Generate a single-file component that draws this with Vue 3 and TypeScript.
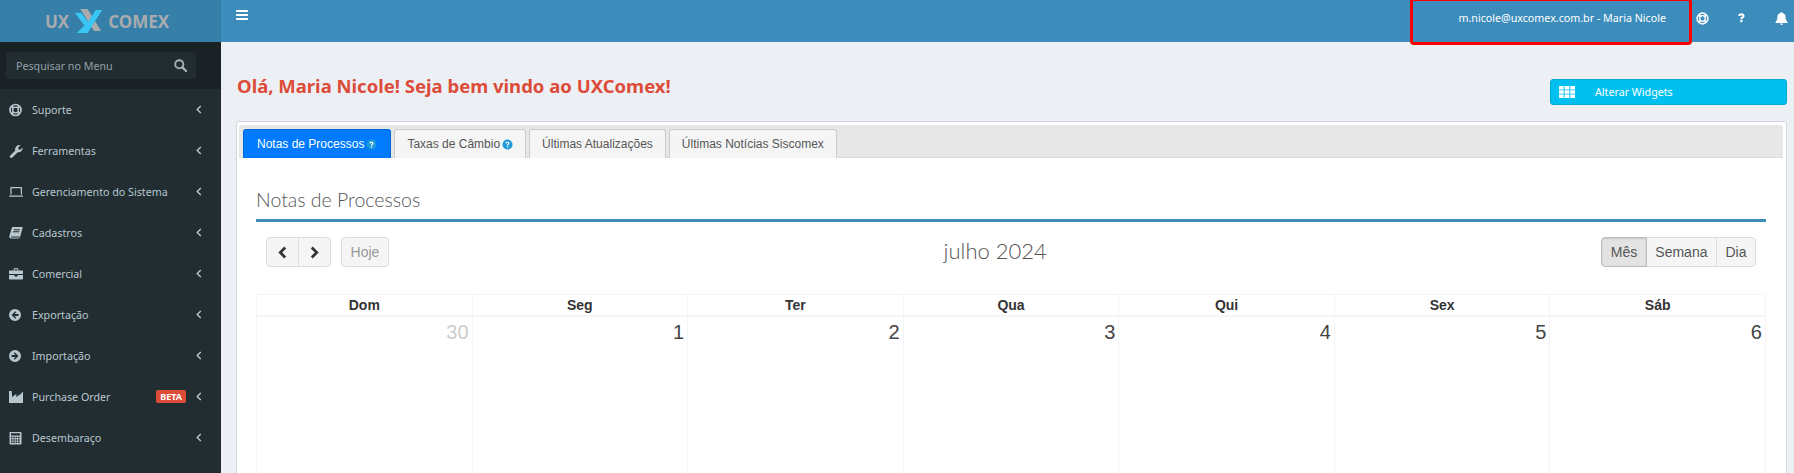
<script setup lang="ts">
const menu = [
  { label: 'Suporte', icon: 'ring' },
  { label: 'Ferramentas', icon: 'wrench' },
  { label: 'Gerenciamento do Sistema', icon: 'laptop' },
  { label: 'Cadastros', icon: 'book' },
  { label: 'Comercial', icon: 'case' },
  { label: 'Exportação', icon: 'left' },
  { label: 'Importação', icon: 'right' },
  { label: 'Purchase Order', icon: 'factory', badge: 'BETA' },
  { label: 'Desembaraço', icon: 'calc' },
]
const tabs = [
  { label: 'Notas de Processos', help: true, active: true },
  { label: 'Taxas de Câmbio', help: true },
  { label: 'Últimas Atualizações' },
  { label: 'Últimas Notícias Siscomex' },
]
const days = ['Dom', 'Seg', 'Ter', 'Qua', 'Qui', 'Sex', 'Sáb']
const dates = [30, 1, 2, 3, 4, 5, 6]
</script>

<template>
  <div class="page">
    <aside class="side">
      <div class="logo">
        <span>UX</span>
        <svg class="logo-x" viewBox="0 0 32 26" width="29" height="25" preserveAspectRatio="none">
          <path d="M7 0h8l15 23h-8z" fill="#a9abae" />
          <path d="M31 1 15 25H3l12-11L24 1z" fill="#38c6f4" />
          <path d="M1 4h7l8 10-4 4z" fill="#38c6f4" />
        </svg>
        <span>COMEX</span>
      </div>
      <div class="search-zone">
        <div class="search">
          <span>Pesquisar no Menu</span>
          <svg viewBox="0 0 14 14" width="13" height="13" fill="none" stroke="#a5b4bb" stroke-width="2">
            <circle cx="5.7" cy="5.7" r="4.4" />
            <path d="M9 9l4 4" stroke-linecap="round" stroke-width="2.4" />
          </svg>
        </div>
      </div>
      <nav>
        <div v-for="m in menu" :key="m.label" class="item">
          <svg class="mi" viewBox="0 0 14 14" width="14" height="14" fill="#b8c7ce">
            <template v-if="m.icon === 'ring'">
              <circle cx="6.500" cy="7" r="5.500" fill="none" stroke="#b8c7ce" stroke-width="1.700" />
              <circle cx="6.500" cy="7" r="2.900" fill="none" stroke="#b8c7ce" stroke-width="1.400" />
              <path d="M2.600 3.100l2 2M10.400 3.100l-2 2M2.600 10.900l2-2M10.400 10.900l-2-2" stroke="#b8c7ce" stroke-width="2" />
            </template>
            <path v-else-if="m.icon === 'wrench'" d="M.8 12.100 6.300 6.600C5.700 4.400 6.600 1.600 10.100 1c.6 0 1 .1 1.400.3L9.200 3.600l.3 1.800 1.800.4 2.200-2.300c.5 2.800-1.500 5.200-4.800 4.800l-5.600 5.400c-.9.7-3.100-.6-2.100-1.600z" />
            <path v-else-if="m.icon === 'laptop'" d="M2 2h10.400c.4 0 .6.2.6.6V9.600h-1.200V3.200H2.600v6.400H1.400V2.600C1.400 2.200 1.600 2 2 2zM0 10.400h14.400c0 .9-.5 1.300-1.200 1.300H1.200C.5 11.700 0 11.300 0 10.400z" />
            <path v-else-if="m.icon === 'book'" d="M3.500 1h9.500c.7 0 .8.500.6 1.100l-2.500 9c-.3.900-.8 1.400-1.800 1.400H2C.8 12.500 0 11.400.3 10.100L3 1.600c.1-.4.2-.6.5-.6zM5 3.200l-.3 1h6l.3-1zM4.300 5.200l-.3 1h6l.3-1zM2.200 10.400c-.4.600 0 1 .5 1h7.700l.3-1z" />
            <path v-else-if="m.icon === 'case'" d="M4.600 2.200C4.600 1.500 5 1.200 5.600 1.200h2.800c.7 0 1 .4 1 1V3.400H14V7H0V3.400h4.600zM5.600 2.200v1.200h2.800V2.200zM0 8h5.500v1.400h3V8H14v3.600c0 .5-.4.900-.9.900H.9c-.5 0-.9-.4-.9-.9z" />
            <path v-else-if="m.icon === 'left'" fill-rule="evenodd" d="M6 1a6 6 0 1 1 0 12A6 6 0 0 1 6 1zM6.300 3.200 2.500 7l3.800 3.800 1-1L5.500 7.900H9.500V6.100H5.500L7.300 4.200z" />
            <path v-else-if="m.icon === 'right'" fill-rule="evenodd" d="M6 1a6 6 0 1 1 0 12A6 6 0 0 1 6 1zM5.700 3.200 9.500 7 5.700 10.800l-1-1L6.500 7.900H2.500V6.100H6.500L4.700 4.200z" />
            <path v-else-if="m.icon === 'factory'" d="M0 1h2.600l.6 6L7.300 4v3L12 3.800 14 1.600V13H0z" />
            <path v-else fill-rule="evenodd" d="M1 1h10.800c.4 0 .7.300.7.700v11c0 .4-.3.800-.7.800H1.200c-.4 0-.7-.4-.7-.8v-11C.5 1.300.7 1 1 1zM2 2.200v2.400h9V2.200zM2 5.800v1.500h1.500V5.800zM4.300 5.800v1.500h1.500V5.800zM6.600 5.800v1.500h1.500V5.800zM8.900 5.800v1.500h1.700V5.800zM2 8.200v1.500h1.500V8.200zM4.300 8.200v1.500h1.500V8.200zM6.600 8.200v1.500h1.500V8.200zM8.900 8.200v1.500h1.700V8.200zM2 10.600v1.500h1.500v-1.500zM4.300 10.600v1.500h1.500v-1.500zM6.600 10.600v1.500h1.500v-1.500zM8.900 10.600v1.500h1.700v-1.500z" />
          </svg>
          <span class="ml">{{ m.label }}</span>
          <span v-if="m.badge" class="badge">{{ m.badge }}</span>
          <svg class="chev" viewBox="0 0 6 10" width="6" height="9" fill="none" stroke="#b8c7ce" stroke-width="1.500">
            <path d="M5 1 1 5l4 4" />
          </svg>
        </div>
      </nav>
    </aside>

    <main class="main">
      <header class="top">
        <svg class="bars" viewBox="0 0 12 10" width="12" height="10" fill="#fff">
          <rect y="0" width="12" height="2" rx=".4" />
          <rect y="4" width="12" height="2" rx=".4" />
          <rect y="8" width="12" height="2" rx=".4" />
        </svg>
        <div class="top-right">
          <span class="user">m.nicole@uxcomex.com.br - Maria Nicole</span>
          <svg viewBox="0 0 14 14" width="13" height="13" class="tico1" fill="#fff">
            <circle cx="7" cy="7" r="5.800" fill="none" stroke="#fff" stroke-width="1.700" />
            <circle cx="7" cy="7" r="3" fill="none" stroke="#fff" stroke-width="1.400" />
            <path d="M3 3l2.200 2.200M11 3 8.800 5.200M3 11l2.200-2.200M11 11 8.800 8.800" stroke="#fff" stroke-width="2" />
          </svg>
          <svg viewBox="0 0 8 12" width="7" height="10" fill="#fff" class="tico2">
            <path d="M0 3.500C.5 1.200 2.100.4 4 .4c2 0 3.700 1.200 3.700 3.100 0 1.600-1 2.200-1.900 2.800-.5.300-.7.600-.7 1.200H2.600c0-1.300.3-2 1.400-2.700.6-.4 1-.7 1-1.200 0-.6-.5-1-1.100-1-.7 0-1.200.5-1.500 1.100zM2.600 8.500h2.500v2.600H2.600z" />
          </svg>
          <svg viewBox="0 0 14 14" width="13" height="13" fill="#fff" class="tico3">
            <path d="M7 0c.6 0 .9.400.9 1 2.200.4 3.500 2 3.500 4.200 0 3.200.7 4.300 2.100 5.800v.8H.5V11c1.400-1.500 2.100-2.600 2.100-5.800C2.600 3 3.900 1.400 6.100 1c0-.6.300-1 .9-1zM5.400 12.500h3.200C8.600 13.500 7.900 14 7 14s-1.600-.5-1.600-1.500z" />
          </svg>
        </div>
        <div class="redbox"></div>
      </header>

      <div class="content">
        <div class="title-row">
          <h1>Olá, Maria Nicole! Seja bem vindo ao UXComex!</h1>
          <button class="widgets">
            <svg viewBox="0 0 16 12" width="16" height="12" fill="#fff">
              <path d="M0 0h4.700v3.400H0zM5.600 0h4.800v3.400H5.600zM11.300 0H16v3.400h-4.700zM0 4.300h4.700v3.400H0zM5.600 4.300h4.800v3.400H5.600zM11.300 4.300H16v3.400h-4.700zM0 8.600h4.700V12H0zM5.600 8.600h4.800V12H5.600zM11.300 8.600H16V12h-4.700z" />
            </svg>
            <span>Alterar Widgets</span>
          </button>
        </div>

        <section class="panel">
          <div class="tabs">
            <div v-for="t in tabs" :key="t.label" class="tab" :class="{ active: t.active }">
              {{ t.label }}
              <svg v-if="t.help" viewBox="0 0 12 12" width="11" height="11" class="help">
                <circle cx="6" cy="6" r="5.500" fill="#1c9bd8" />
                <path d="M3.800 4.600C4 3.400 4.900 2.900 6 2.900c1.200 0 2.200.7 2.200 1.800 0 .9-.6 1.300-1.100 1.600-.4.300-.5.500-.5.900H5.300c0-.8.200-1.200.8-1.600.4-.3.700-.5.700-.8 0-.3-.3-.6-.7-.6-.5 0-.7.300-.9.700zM5.300 7.900h1.400v1.300H5.300z" fill="#fff" />
              </svg>
            </div>
          </div>
          <div class="body">
            <h2>Notas de Processos</h2>
            <div class="toolbar">
              <div class="tb-left">
                <div class="group">
                  <button class="btn arrow">
                    <svg viewBox="0 0 10 14" width="9" height="13" fill="none" stroke="#333" stroke-width="3"><path d="M8 1.500 2.500 7 8 12.500" /></svg>
                  </button>
                  <button class="btn arrow">
                    <svg viewBox="0 0 10 14" width="9" height="13" fill="none" stroke="#333" stroke-width="3"><path d="M2 1.500 7.500 7 2 12.500" /></svg>
                  </button>
                </div>
                <button class="btn today">Hoje</button>
              </div>
              <div class="month">julho 2024</div>
              <div class="group views">
                <button class="btn on">Mês</button>
                <button class="btn">Semana</button>
                <button class="btn">Dia</button>
              </div>
            </div>
            <div class="cal">
              <div v-for="d in days" :key="d" class="head">{{ d }}</div>
              <div v-for="(n, i) in dates" :key="n" class="cell" :class="{ other: i === 0 }">{{ n }}</div>
            </div>
          </div>
        </section>
      </div>
    </main>
  </div>
</template>

<style>
html, body { margin: 0; overflow: hidden; background: #ecf0f5; }
</style>

<style scoped>
.page { display: flex; width: 1794px; height: 473px; overflow: hidden; font-family: "Noto Sans", sans-serif; }
.side { flex: 0 0 221px; background: #222d32; color: #b8c7ce; }
.logo { height: 42px; background: #367fa9; display: flex; align-items: center; justify-content: center; color: #a9abae; font: 700 17px "Noto Sans", sans-serif; padding-right: 7px; box-sizing: border-box; }
.logo-x { margin: 0 5px; }
.search-zone { height: 47px; background: #1a2226; padding: 10px 6px; box-sizing: border-box; }
.search { height: 27px; width: 190px; background: #222d32; border-radius: 4px; display: flex; align-items: center; justify-content: space-between; padding: 0 9px 0 10px; box-sizing: border-box; font-size: 10.7px; color: #92a0a7; }
.item { height: 41px; display: flex; align-items: center; padding-left: 9px; font-size: 10.7px; }
.mi { flex: none; }
.ml { margin-left: 9px; flex: 1; padding-top: 1px; }
.badge { background: #dd4b39; color: #fff; font: 700 9px "Noto Sans", sans-serif; height: 13px; line-height: 13px; padding: 0 4px; border-radius: 2px; margin-right: 10px; }
.chev { margin-right: 19px; flex: none; }
.main { flex: 1; min-width: 0; display: flex; flex-direction: column; }
.top { position: relative; height: 42px; background: #3c8dbc; display: flex; align-items: flex-start; justify-content: space-between; flex: none; }
.bars { margin: 10px 0 0 15px; }
.top-right { display: flex; align-items: center; height: 36px; color: #fff; font-size: 10.7px; }
.user { margin-right: 30px; }
.tico1 { margin-right: 29px; }
.tico2 { margin-right: 30px; }
.tico3 { margin-right: 6px; }
.redbox { position: absolute; left: 1189px; top: -2px; width: 282px; height: 47px; border: 3px solid #f00; border-radius: 4px; box-sizing: border-box; }
.content { padding: 0 7px 0 16px; }
.title-row { height: 79px; position: relative; display: flex; justify-content: space-between; }
h1 { margin: 32px 0 0; font: 700 18.5px/24px "Noto Sans", sans-serif; color: #dd4b39; }
.widgets { width: 237px; height: 26px; margin-top: 37px; background: #00c0ef; border: 1px solid #00acd6; border-radius: 3px; color: #fff; display: flex; align-items: center; padding: 0 8px; font: 10.7px "Noto Sans", sans-serif; }
.widgets span { margin-left: 20px; }
.panel { background: #fff; border: 1px solid #d2d6de; border-radius: 3px; height: 400px; padding: 3px 3px 0 2px; margin-left: -1px; }
.tabs { display: flex; gap: 3px; background: #e7e7e7; height: 33px; padding: 4px 0 0 4px; box-sizing: border-box; border-radius: 3px 3px 0 0; border-bottom: 1px solid #ddd; }
.tab { display: flex; align-items: center; gap: 3px; height: 29px; padding: 0 12px; box-sizing: border-box; background: #f5f5f5; border: 1px solid #ccc; border-bottom: 0; border-radius: 3px 3px 0 0; color: #555; font: 12px "Liberation Sans", sans-serif; white-space: nowrap; }
.tab.active { background: #007bff; border-color: #0069d9; color: #fff; padding: 0 13px; }
.help { margin-left: -1px; }
.body { padding: 0 17px; }
h2 { margin: 0; height: 64px; padding-top: 28px; box-sizing: border-box; border-bottom: 3px solid #3c8dbc; font: 300 19.5px/28px Lato, sans-serif; color: #555; }
.toolbar { display: flex; justify-content: space-between; align-items: center; padding: 15px 10px 0; height: 30px; box-sizing: content-box; }
.tb-left { display: flex; gap: 10px; }
.group { display: flex; }
.btn { height: 30px; background: #f5f5f5; border: 1px solid #ddd; color: #555; font: 14px "Liberation Sans", sans-serif; padding: 0 8.5px; box-sizing: border-box; margin: 0; }
.group .btn + .btn { margin-left: -1px; }
.group .btn:first-child { border-radius: 4px 0 0 4px; }
.group .btn:last-child { border-radius: 0 4px 4px 0; }
.arrow { width: 33px; padding: 0; display: flex; align-items: center; justify-content: center; }
.today { border-radius: 4px; color: #999; width: 48px; padding: 0; }
.btn.on { background: #e3e3e3; border-color: #bbb; box-shadow: inset 0 1px 2px rgba(0,0,0,.12); position: relative; z-index: 1; }
.month { font: 300 22px/28px Lato, sans-serif; color: #555; padding-bottom: 2px; }
.cal { margin-top: 27px; display: grid; grid-template-columns: repeat(7, 1fr); border-top: 1px solid #f4f4f4; border-left: 1px solid #f4f4f4; }
.head { height: 22px; box-sizing: border-box; border-right: 1px solid #f4f4f4; border-bottom: 2px solid #f4f4f4; text-align: center; font: 700 14px/20px "Liberation Sans", sans-serif; color: #333; }
.cell { height: 300px; border-right: 1px solid #f4f4f4; text-align: right; padding: 3px 3px 0 0; font: 20px/24px "Liberation Sans", sans-serif; color: #444; }
.cell.other { color: #ccc; }
</style>
